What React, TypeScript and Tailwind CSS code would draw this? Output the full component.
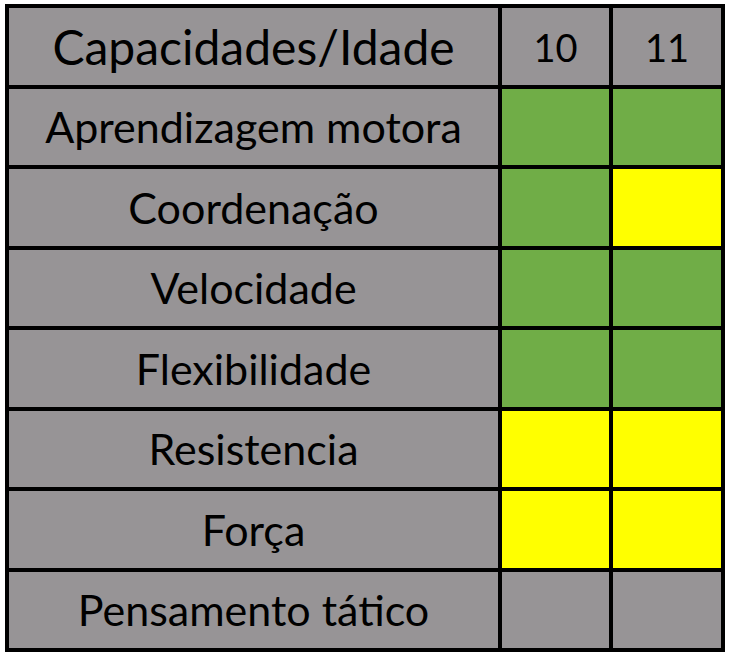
import React from "react";

const G = "bg-[#70ad47]";
const Y = "bg-[#ffff00]";
const N = "bg-[#979496]";

const rows: [string, string, string][] = [
  ["Aprendizagem motora", G, G],
  ["Coordenação", G, Y],
  ["Velocidade", G, G],
  ["Flexibilidade", G, G],
  ["Resistencia", Y, Y],
  ["Força", Y, Y],
  ["Pensamento tático", N, N],
];

export default function App() {
  return (
    <div className="w-[729px] h-[657px] bg-white pt-[4px] pl-[5px]" style={{ fontFamily: "Lato, 'Open Sans', sans-serif" }}>
      <div className="grid grid-cols-[489px_107px_108px] grid-rows-8 gap-[4px] p-[4px] bg-black w-[720px] h-[648px] text-black">
        <div className="bg-[#979496] flex items-center justify-center text-[48px] leading-none pt-[2px]">Capacidades/Idade</div>
        <div className="bg-[#979496] flex items-center justify-center text-[38px] leading-none pt-[2px]">10</div>
        <div className="bg-[#979496] flex items-center justify-center text-[38px] leading-none pt-[2px]">11</div>
        {rows.map(([label, a, b]) => (
          <React.Fragment key={label}>
            <div className="bg-[#979496] flex items-center justify-center text-[43px] leading-none">{label}</div>
            <div className={a}></div>
            <div className={b}></div>
          </React.Fragment>
        ))}
      </div>
    </div>
  );
}
